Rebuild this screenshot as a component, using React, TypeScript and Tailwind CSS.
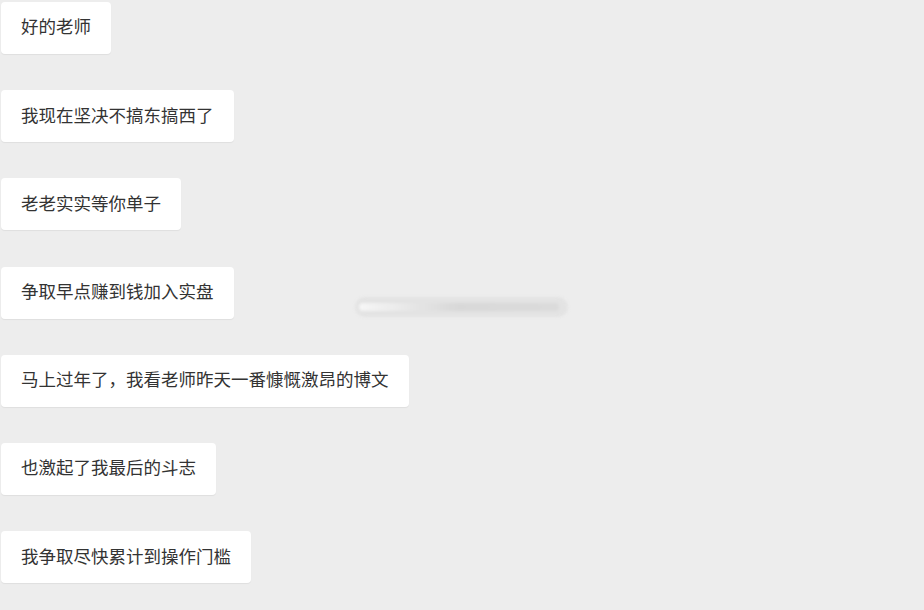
const messages = [
  "好的老师",
  "我现在坚决不搞东搞西了",
  "老老实实等你单子",
  "争取早点赚到钱加入实盘",
  "马上过年了，我看老师昨天一番慷慨激昂的博文",
  "也激起了我最后的斗志",
  "我争取尽快累计到操作门槛",
];

const App = () => {
  return (
    <div
      className="relative h-[610px] w-[924px] overflow-hidden bg-[#ededed]"
      style={{ fontFamily: '"Noto Sans CJK SC", "Noto Sans", sans-serif' }}
    >
      <div className="flex flex-col items-start gap-[36.2px] pt-[2px] pl-[1px]">
        {messages.map((msg) => (
          <div
            key={msg}
            className="flex h-[52px] items-center rounded-[4px] bg-white px-[20px] pb-[3px] text-[17.5px] text-[#333] shadow-[0_1px_1px_rgba(0,0,0,0.06)]"
          >
            {msg}
          </div>
        ))}
      </div>
      {/* blurred watermark */}
      <div className="absolute left-[355px] top-[297px] flex h-[20px] w-[213px] items-center rounded-full bg-[#e2e2e2] opacity-90 blur-[1.5px]">
        <div className="ml-[4px] h-[8px] w-[200px] rounded-full bg-gradient-to-r from-[#f8f8f8] via-[#d6d6d6] to-[#dadada]" />
      </div>
    </div>
  );
};

export default App;
